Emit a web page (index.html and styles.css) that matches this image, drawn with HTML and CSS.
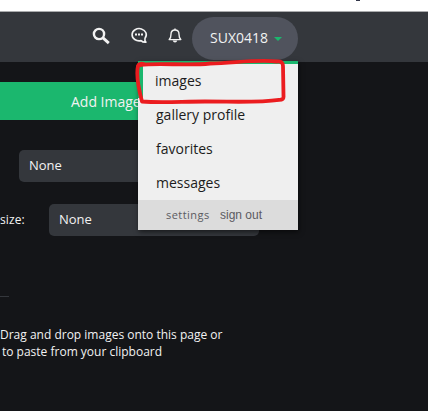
FILE: index.html
```html
<!DOCTYPE html>
<html lang="en">
<head>
<meta charset="utf-8">
<title>Upload</title>
<link rel="stylesheet" href="styles.css">
</head>
<body>
<div class="browser-edge"><span class="tick"></span></div>
<header class="topbar">
  <nav class="icons">
    <svg class="search" width="18" height="18" viewBox="0 0 18 18"><circle cx="7" cy="7" r="5.1" fill="none" stroke="#f2f2f2" stroke-width="2.4"/><path d="M10.7 10.7L16.800 16.200" fill="none" stroke="#f2f2f2" stroke-width="2.9"/></svg>
    <svg class="chat" width="18" height="18" viewBox="0 0 18 18"><path d="M15 11.200A7.100 6.100 0 1 0 11 13.600C12.400 15 14 15.400 16 15.200C14.800 14 14.600 12.700 15 11.200Z" fill="none" stroke="#f2f2f2" stroke-width="1.6" stroke-linejoin="round"/><path d="M5 7.500h2M8 7.500h2M11 7.500h2" stroke="#f2f2f2" stroke-width="1.9"/></svg>
    <svg class="bell" width="14" height="16" viewBox="0 0 14 16"><path d="M1.2 11.6H12.8C11.1 10.1 11 9 11 6.2C11 3.5 9.3 2 7 2S3 3.5 3 6.2C3 9 2.9 10.1 1.2 11.6Z" fill="none" stroke="#f2f2f2" stroke-width="1.4" stroke-linejoin="round"/><path d="M7 .4V2" stroke="#f2f2f2" stroke-width="1.4"/><path d="M4.7 12.6H9.3Q8.8 14.5 7 14.5T4.7 12.6Z" fill="#f2f2f2"/></svg>
  </nav>
  <div class="account">
    <button class="user">SUX0418<i class="caret"></i></button>
    <div class="menu">
      <a class="item active">images</a>
      <a class="item">gallery profile</a>
      <a class="item">favorites</a>
      <a class="item">messages</a>
      <div class="menu-foot"><a class="settings">settings</a><a class="signout">sign out</a></div>
      <svg class="marker" width="156" height="50" viewBox="134 57 156 50"><path d="M140 65C158 62.5 187 66 210 63.500C238 62.5 258 59.5 277 61.500Q283 61 283 66L283.500 96Q284 100 279 99.800C258 103 235 101.500 205 101.500C182 101.500 160 103 142 101.500C140 94 135.500 77 138 66Q138.500 63 144 64" fill="none" stroke="#eb1c1f" stroke-width="3.8" stroke-linejoin="round" stroke-linecap="round"/></svg>
    </div>
  </div>
</header>
<main>
  <button class="add">Add Images</button>
  <div class="row first"><div class="select">None</div></div>
  <div class="row second"><label>size:</label><div class="select">None</div></div>
  <div class="rule"></div>
  <p class="hint">Drag and drop images onto this page or<br><span>to paste from your clipboard</span></p>
</main>
</body>
</html>
```
FILE: styles.css
```css
* { box-sizing: border-box; }
body {
  margin: 0;
  width: 428px;
  height: 411px;
  overflow: hidden;
  background: #141518;
  color: #f2f2f2;
  font-family: "Open Sans", "Noto Sans", sans-serif;
  font-size: 13px;
}
button { border: 0; font-family: inherit; color: inherit; }
.browser-edge {
  height: 12px;
  background: #fff;
  border-bottom: 1px solid #aaabad;
}
.tick {
  display: block;
  width: 4px;
  height: 1px;
  margin-left: 356px;
  background: #34374a;
}
.topbar {
  display: flex;
  height: 50px;
  padding-left: 92px;
  background: #34373c;
}
.icons { display: flex; width: 100px; padding-top: 15px; }
.icons svg { display: block; flex: none; }
.chat { margin-left: 20px; }
.bell { margin: 1px 0 0 20px; }
.account { position: relative; width: 106px; padding-top: 5px; }
.user {
  display: flex;
  align-items: center;
  width: 106px;
  height: 43px;
  padding: 0 0 3px 18px;
  border-radius: 22px;
  background: #50535d;
  font-size: 14px;
}
.caret {
  margin: 4px 0 0 6px;
  border: 4px solid transparent;
  border-top-color: #1bb76e;
  border-bottom: 0;
}
.menu {
  position: absolute;
  top: 49px;
  right: 0;
  width: 160px;
  height: 169px;
  border-top: 3px solid #1bb76e;
  background: #efefef;
  box-shadow: 1px 2px 5px rgba(0, 0, 0, .55);
  color: #1c1c20;
}
.item {
  display: block;
  height: 34px;
  padding-left: 18px;
  font-size: 14px;
  line-height: 34px;
}
.active { padding-left: 12px; border-left: 5px solid #1bb76e; }
.menu-foot {
  display: flex;
  height: 30px;
  padding-left: 28px;
  background: #dcdcdc;
  color: #5b5b61;
  line-height: 30px;
}
.settings { width: 54px; font-size: 11px; letter-spacing: .45px; }
.signout { font: 12px/31px "Liberation Sans", sans-serif; }
.marker { position: absolute; left: -4px; top: -7px; }
.add {
  display: block;
  width: 240px;
  height: 38px;
  margin-top: 20px;
  padding: 0 0 0 71px;
  background: #1bb76e;
  font-size: 14px;
  text-align: left;
}
.row { display: flex; height: 32px; line-height: 31px; }
.first { margin-top: 30px; padding-left: 19px; }
.second { margin-top: 22px; }
.second label { width: 49px; font-size: 12px; letter-spacing: .1px; }
.select {
  width: 210px;
  padding-left: 10px;
  border-radius: 5px;
  background: #34373c;
}
.rule { width: 9px; height: 1px; margin-top: 60px; background: #34373c; }
.hint { margin: 29px 0 0; font-size: 12px; line-height: 17px; white-space: nowrap; }
.hint span { margin-left: 2px; }
```
